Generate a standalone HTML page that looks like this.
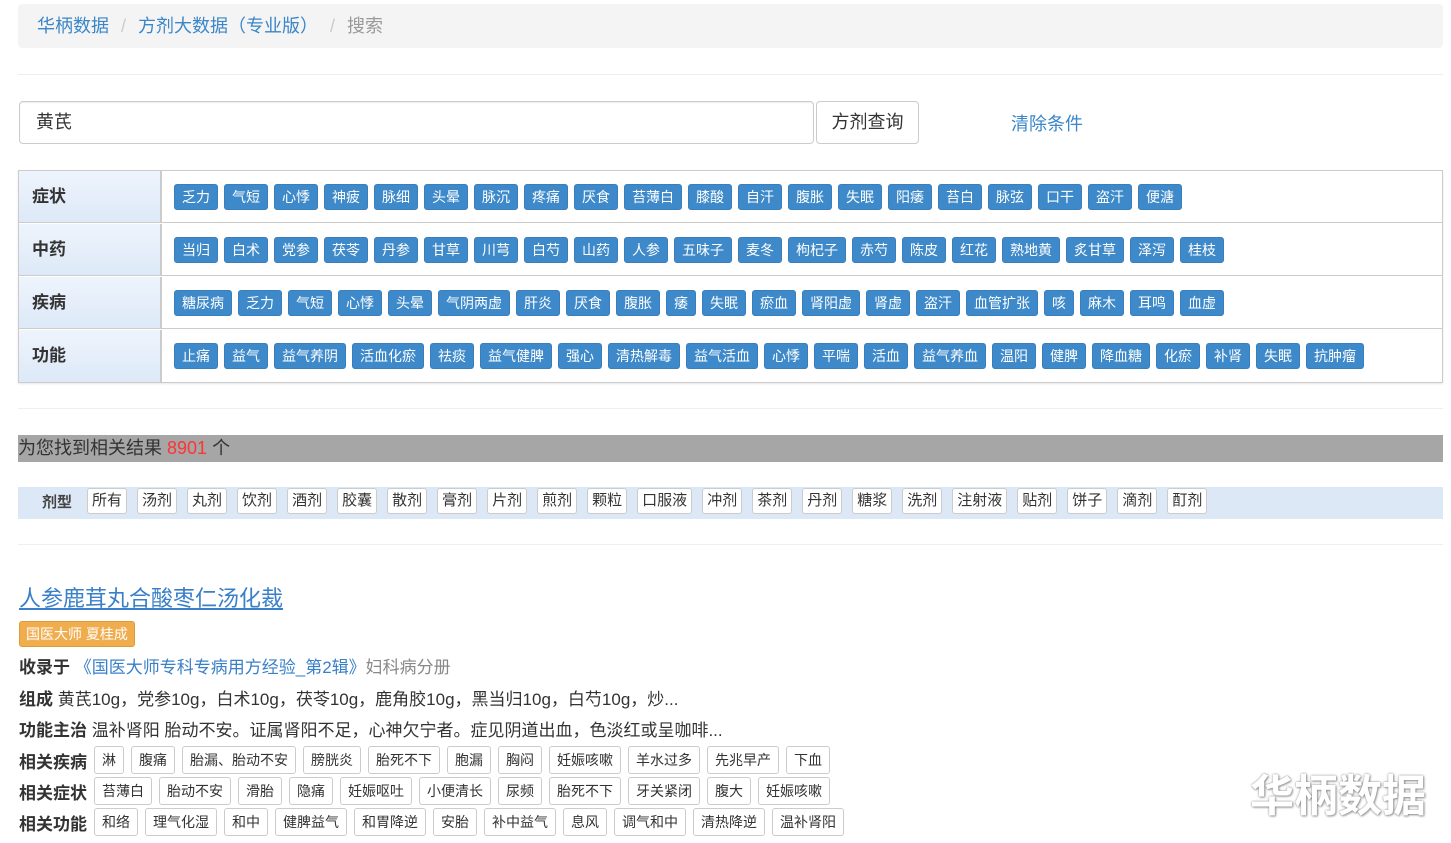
<!DOCTYPE html>
<html><head><meta charset="utf-8"><style>
*{box-sizing:border-box;margin:0;padding:0}
body{width:1451px;height:843px;background:#fff;font-family:"Liberation Sans","Noto Sans CJK SC",sans-serif;color:#333;position:relative;overflow:hidden}
.abs{position:absolute}
.bc{left:18px;top:4px;width:1425px;height:44px;background:#f4f4f4;border-radius:4px;font-size:18px;line-height:44px;padding-left:19px;color:#999}
.bc a{color:#3a86c8;text-decoration:none}
.bc .s{color:#ccc;margin:0 12px}
hr{position:absolute;left:18px;width:1425px;border:0;border-top:1px solid #eee}
.inp{left:19px;top:101px;width:795px;height:43px;border:1px solid #ccc;border-radius:4px;font-size:18px;line-height:41px;padding-left:16px;box-shadow:inset 0 1px 1px rgba(0,0,0,.08)}
.btn{left:816px;top:101px;width:103px;height:43px;border:1px solid #ccc;border-radius:4px;font-size:18px;line-height:41px;text-align:center}
.clr{left:1011px;top:110px;font-size:18px;color:#3a86c8}
.tbl{left:18px;top:170px;width:1425px;height:213px;border:1px solid #ccc;box-shadow:0 1px 2px rgba(0,0,0,.1)}
.row{position:absolute;left:0;width:1423px;height:52px;border-bottom:1px solid #ccc}
.lab{position:absolute;left:0;top:0;width:143px;height:100%;background:linear-gradient(#eef4fc,#dde9f8);border-right:2px solid #ccc;font-size:17px;font-weight:bold;line-height:52px;padding-left:13px;color:#333}
.tags{position:absolute;left:155px;top:13px;display:flex;gap:6px}
.t{background:#3d89c9;color:#fff;font-size:14px;height:26px;line-height:24px;padding:0 7px;border-radius:3px;border:1px solid #3a7fbd;white-space:nowrap}
.res{left:18px;top:435px;width:1425px;height:27px;background:#a6a6a6;font-size:18px;line-height:27px;color:#333}
.res b{color:#f33;font-weight:normal}
.jx{left:18px;top:487px;width:1425px;height:32px;background:#dde8f6}
.jx .l{position:absolute;left:24px;top:4px;font-size:15px;font-weight:bold;color:#444}
.jx .tg{position:absolute;left:69px;top:1px;display:flex;gap:10px}
.jx .w{font-size:15px;padding:0 4px}
.w{background:#fff;border:1px solid #ccc;border-radius:3px;font-size:14px;height:26px;line-height:24px;padding:0 4px;color:#333;white-space:nowrap}
.title{left:19px;top:581px;font-size:22px;color:#3a80c8;text-decoration:underline}
.badge{left:19px;top:621px;height:26px;line-height:24px;padding:0 6px;background:#f0ad4e;border:1px solid #e29a35;border-radius:3px;color:#fff;font-size:14px}
.ln{left:19px;font-size:17px;color:#333;white-space:nowrap}
.ln b{font-weight:bold}
.ln a{color:#3a80c8;text-decoration:none}
.rl{left:19px;display:flex;align-items:center;gap:7px}
.rl b{font-size:17px;white-space:nowrap}
.rl .w{font-size:14px;height:28px;line-height:26px;padding:0 7px}
.wm{right:25px;top:760px;font-size:44px;color:#fff;text-shadow:0 0 2px #888,1px 1px 2px #999;font-weight:bold}
</style></head><body>
<div class="abs bc"><a>华柄数据</a><span class="s">/</span><a>方剂大数据（专业版）</a><span class="s">/</span>搜索</div>
<hr style="top:74px">
<div class="abs inp">黄芪</div>
<div class="abs btn">方剂查询</div>
<div class="abs clr">清除条件</div>
<div class="abs tbl">
<div class="row" style="top:0"><div class="lab">症状</div><div class="tags"><span class="t">乏力</span><span class="t">气短</span><span class="t">心悸</span><span class="t">神疲</span><span class="t">脉细</span><span class="t">头晕</span><span class="t">脉沉</span><span class="t">疼痛</span><span class="t">厌食</span><span class="t">苔薄白</span><span class="t">膝酸</span><span class="t">自汗</span><span class="t">腹胀</span><span class="t">失眠</span><span class="t">阳痿</span><span class="t">苔白</span><span class="t">脉弦</span><span class="t">口干</span><span class="t">盗汗</span><span class="t">便溏</span></div></div>
<div class="row" style="top:53px"><div class="lab">中药</div><div class="tags"><span class="t">当归</span><span class="t">白术</span><span class="t">党参</span><span class="t">茯苓</span><span class="t">丹参</span><span class="t">甘草</span><span class="t">川芎</span><span class="t">白芍</span><span class="t">山药</span><span class="t">人参</span><span class="t">五味子</span><span class="t">麦冬</span><span class="t">枸杞子</span><span class="t">赤芍</span><span class="t">陈皮</span><span class="t">红花</span><span class="t">熟地黄</span><span class="t">炙甘草</span><span class="t">泽泻</span><span class="t">桂枝</span></div></div>
<div class="row" style="top:106px"><div class="lab">疾病</div><div class="tags"><span class="t">糖尿病</span><span class="t">乏力</span><span class="t">气短</span><span class="t">心悸</span><span class="t">头晕</span><span class="t">气阴两虚</span><span class="t">肝炎</span><span class="t">厌食</span><span class="t">腹胀</span><span class="t">痿</span><span class="t">失眠</span><span class="t">瘀血</span><span class="t">肾阳虚</span><span class="t">肾虚</span><span class="t">盗汗</span><span class="t">血管扩张</span><span class="t">咳</span><span class="t">麻木</span><span class="t">耳鸣</span><span class="t">血虚</span></div></div>
<div class="row" style="top:159px;border-bottom:0"><div class="lab">功能</div><div class="tags"><span class="t">止痛</span><span class="t">益气</span><span class="t">益气养阴</span><span class="t">活血化瘀</span><span class="t">祛痰</span><span class="t">益气健脾</span><span class="t">强心</span><span class="t">清热解毒</span><span class="t">益气活血</span><span class="t">心悸</span><span class="t">平喘</span><span class="t">活血</span><span class="t">益气养血</span><span class="t">温阳</span><span class="t">健脾</span><span class="t">降血糖</span><span class="t">化瘀</span><span class="t">补肾</span><span class="t">失眠</span><span class="t">抗肿瘤</span></div></div>
</div>
<hr style="top:408px">
<div class="abs res">为您找到相关结果 <b>8901</b> 个</div>
<div class="abs jx"><span class="l">剂型</span><div class="tg"><span class="w">所有</span><span class="w">汤剂</span><span class="w">丸剂</span><span class="w">饮剂</span><span class="w">酒剂</span><span class="w">胶囊</span><span class="w">散剂</span><span class="w">膏剂</span><span class="w">片剂</span><span class="w">煎剂</span><span class="w">颗粒</span><span class="w">口服液</span><span class="w">冲剂</span><span class="w">茶剂</span><span class="w">丹剂</span><span class="w">糖浆</span><span class="w">洗剂</span><span class="w">注射液</span><span class="w">贴剂</span><span class="w">饼子</span><span class="w">滴剂</span><span class="w">酊剂</span></div></div>
<hr style="top:544px">
<div class="abs title">人参鹿茸丸合酸枣仁汤化裁</div>
<div class="abs badge">国医大师 夏桂成</div>
<div class="abs ln" style="top:653px"><b>收录于</b> <a>《国医大师专科专病用方经验_第2辑》</a><span style="color:#888">妇科病分册</span></div>
<div class="abs ln" style="top:685px"><b>组成</b> 黄芪10g，党参10g，白术10g，茯苓10g，鹿角胶10g，黑当归10g，白芍10g，炒...</div>
<div class="abs ln" style="top:716px"><b>功能主治</b> 温补肾阳 胎动不安。证属肾阳不足，心神欠宁者。症见阴道出血，色淡红或呈咖啡...</div>
<div class="abs rl" style="top:746px"><b>相关疾病</b><span class="w">淋</span><span class="w">腹痛</span><span class="w">胎漏、胎动不安</span><span class="w">膀胱炎</span><span class="w">胎死不下</span><span class="w">胞漏</span><span class="w">胸闷</span><span class="w">妊娠咳嗽</span><span class="w">羊水过多</span><span class="w">先兆早产</span><span class="w">下血</span></div>
<div class="abs rl" style="top:777px"><b>相关症状</b><span class="w">苔薄白</span><span class="w">胎动不安</span><span class="w">滑胎</span><span class="w">隐痛</span><span class="w">妊娠呕吐</span><span class="w">小便清长</span><span class="w">尿频</span><span class="w">胎死不下</span><span class="w">牙关紧闭</span><span class="w">腹大</span><span class="w">妊娠咳嗽</span></div>
<div class="abs rl" style="top:808px"><b>相关功能</b><span class="w">和络</span><span class="w">理气化湿</span><span class="w">和中</span><span class="w">健脾益气</span><span class="w">和胃降逆</span><span class="w">安胎</span><span class="w">补中益气</span><span class="w">息风</span><span class="w">调气和中</span><span class="w">清热降逆</span><span class="w">温补肾阳</span></div>
<div class="abs wm">华柄数据</div>
</body></html>
